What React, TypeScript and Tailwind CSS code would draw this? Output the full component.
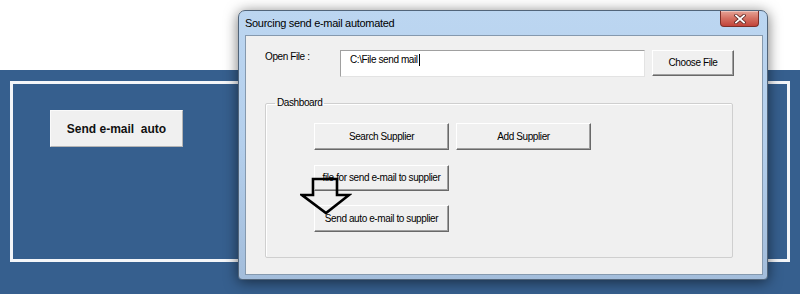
const winBtn =
  'flex items-center justify-center bg-[#f0f0f0] border border-t-white border-l-white border-r-[#696969] border-b-[#696969] shadow-[inset_-1px_-1px_0_#a0a0a0] text-[10px] tracking-[-0.4px] text-black leading-none';

function CloseButton() {
  return (
    <div className="absolute right-[4px] top-0 w-[39px] h-[16px] rounded-b-[4px] border border-t-0 border-[#7d2f28] bg-gradient-to-b from-[#e6a396] via-[#d46f61] to-[#c2433a] flex items-center justify-center shadow-[inset_0_1px_0_rgba(255,255,255,0.35)]">
      <svg width="12" height="10" viewBox="0 0 12 10">
        <path d="M2 1.5 L10 8.5 M10 1.5 L2 8.5" stroke="#5a2420" strokeWidth="3.4" strokeLinecap="square" />
        <path d="M2 1.5 L10 8.5 M10 1.5 L2 8.5" stroke="#ffffff" strokeWidth="1.8" strokeLinecap="square" />
      </svg>
    </div>
  );
}

function DownArrow() {
  return (
    <svg
      className="absolute left-[54px] top-[140px]"
      width="52"
      height="40"
      viewBox="0 0 52 40"
    >
      <polygon
        points="13,3 37,3 37,19 49,19 26,37 2,19 13,19"
        fill="none"
        stroke="#000"
        strokeWidth="2.6"
        strokeLinejoin="miter"
      />
    </svg>
  );
}

export default function App() {
  return (
    <div className="relative w-[800px] h-[301px] bg-white overflow-hidden font-['Liberation_Sans',Arial,sans-serif]">
      <div className="h-[70px]" />
      <div className="bg-[#365f8e] px-[10px] pt-[11px] pb-[32px]">
        <div className="h-[181px] border-[3px] border-[#f4f6f9] pl-[37px] pt-[26px]">
          <button className="w-[133px] h-[37px] bg-[#f0f0f0] border border-t-[#fafafa] border-l-[#fafafa] border-r-[#b4b4b4] border-b-[#b4b4b4] text-[12px] font-bold text-[#111] whitespace-pre">
            Send e-mail  auto
          </button>
        </div>
      </div>

      {/* dialog window */}
      <div className="absolute left-[238px] top-[10px] w-[530px] h-[270px] rounded-t-[7px] rounded-b-[4px] border border-[#52657a] bg-gradient-to-b from-[#bcd6f1] via-[#b4cfec] to-[#a3bddb] shadow-[0_2px_14px_rgba(0,0,0,0.55)] flex flex-col pl-[6px] pr-[4px] pb-[4px]">
        <div className="relative h-[24px] flex items-center">
          <span className="text-[11px] tracking-[-0.3px] text-black">Sourcing send e-mail automated</span>
          <CloseButton />
        </div>

        <div className="relative flex-1 bg-[#f0f0f0] border border-[#8599ae] pt-[14px] pl-[19px]">
          <div className="flex items-start">
            <span className="w-[75px] pt-[1px] text-[10px] tracking-[-0.4px] leading-[12px] text-black">Open File :</span>
            <div className="w-[305px] h-[27px] bg-white border border-t-[#a0a0a0] border-l-[#a0a0a0] border-r-[#e3e3e3] border-b-[#e3e3e3] pl-[9px] pt-[3px] flex items-start">
              <span className="text-[10px] tracking-[-0.4px] leading-[12px] text-black">{'C:\\File send mail'}</span>
              <span className="w-px h-[12px] bg-black ml-[1px]" />
            </div>
            <button className={`${winBtn} ml-[7px] w-[82px] h-[26px]`}>Choose File</button>
          </div>

          <fieldset className="mt-[20px] w-[468px] h-[161px] border border-[#cfcfcf] rounded-[2px] shadow-[inset_1px_1px_0_#fff]">
            <legend className="ml-[9px] px-[2px] text-[10px] tracking-[-0.4px] leading-[12px] text-black">Dashboard</legend>
            <div className="pl-[48px] pt-[14px]">
              <div className="flex gap-[7px]">
                <button className={`${winBtn} w-[135px] h-[27px]`}>Search Supplier</button>
                <button className={`${winBtn} w-[135px] h-[27px]`}>Add Supplier</button>
              </div>
              <button className={`${winBtn} mt-[15px] w-[135px] h-[26px]`}>file for send e-mail to supplier</button>
              <button className={`${winBtn} mt-[14px] w-[135px] h-[27px]`}>Send auto e-mail to supplier</button>
            </div>
          </fieldset>

          <DownArrow />
        </div>
      </div>
    </div>
  );
}
